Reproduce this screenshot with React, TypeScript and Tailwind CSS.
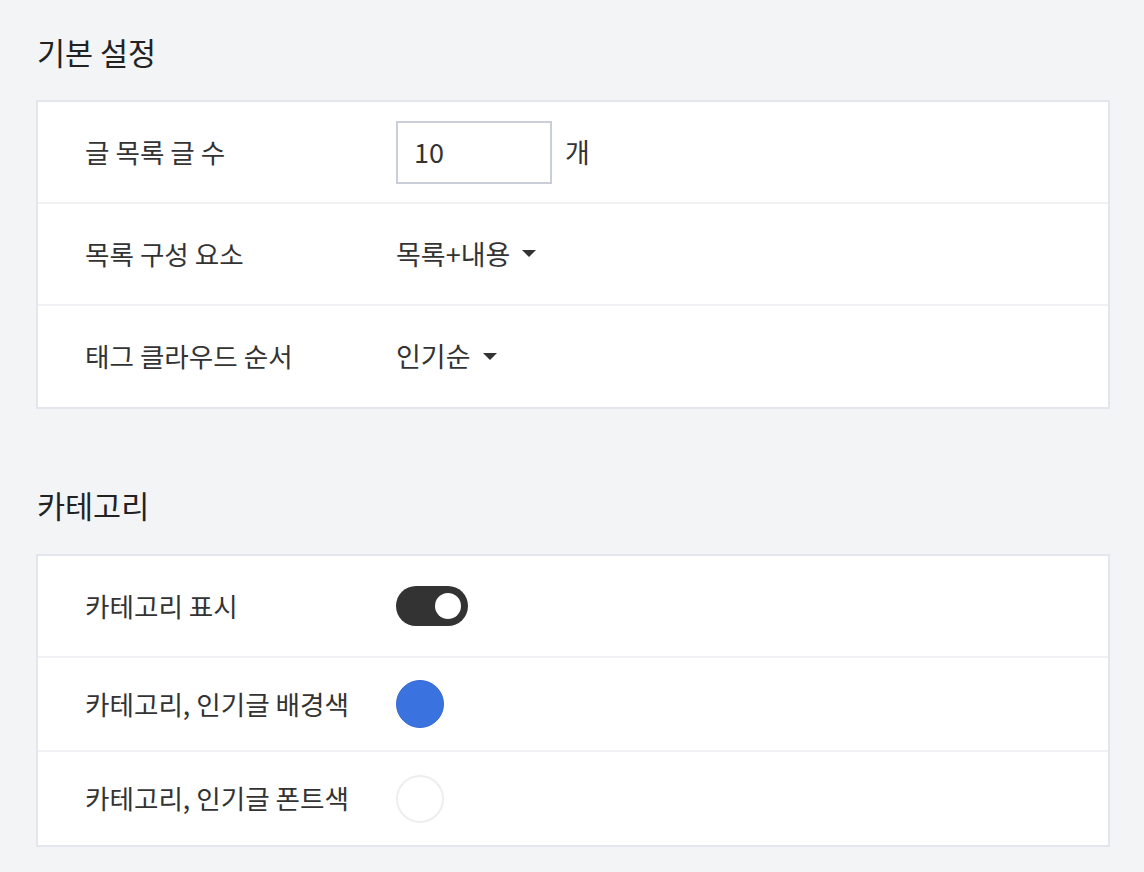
import React from "react";

const font = { fontFamily: '"Noto Sans CJK KR", "Noto Sans", sans-serif' };

function Row({ label, children, h, last }: { label: string; children: React.ReactNode; h: string; last?: boolean }) {
  return (
    <div className={`flex items-center ${h} ${last ? "" : "border-b-2 border-[#eff1f5]"}`}>
      <div className="w-[358px] pl-[47px] text-[26.6px] text-[#333] leading-none">{label}</div>
      <div className="flex items-center">{children}</div>
    </div>
  );
}

function Caret() {
  return (
    <svg width="14" height="8" viewBox="0 0 14 8" className="ml-[12px]">
      <polygon points="0,0 14,0 7,7" fill="#333" />
    </svg>
  );
}

export default function App() {
  return (
    <div style={font} className="min-h-[872px] w-[1144px] bg-[#f3f4f6] pl-[36px] pr-[34px] pt-[30px]">
      <h2 className="text-[30.5px] leading-[44px] text-[#222] pl-[1px]">기본 설정</h2>
      <div className="mt-[26px] border-2 border-[#e3e6ec] bg-white">
        <Row label="글 목록 글 수" h="h-[102px]">
          <div className="flex h-[63px] w-[156px] items-center border-2 border-[#c9ced8] pl-[16px] text-[27px] text-[#333]">10</div>
          <span className="ml-[13px] text-[27px] text-[#333]">개</span>
        </Row>
        <Row label="목록 구성 요소" h="h-[102px]">
          <span className="text-[27px] text-[#333]">목록+내용</span>
          <Caret />
        </Row>
        <Row label="태그 클라우드 순서" h="h-[101px]" last>
          <span className="text-[27px] text-[#333]">인기순</span>
          <Caret />
        </Row>
      </div>
      <h2 className="mt-[74px] text-[30.5px] leading-[44px] text-[#222] pl-[1px]">카테고리</h2>
      <div className="mt-[27px] border-2 border-[#e3e6ec] bg-white">
        <Row label="카테고리 표시" h="h-[102px]">
          <div className="flex h-[40px] w-[72px] items-center justify-end rounded-full bg-[#333] pr-[7px]">
            <div className="h-[26px] w-[26px] rounded-full bg-white" />
          </div>
        </Row>
        <Row label="카테고리, 인기글 배경색" h="h-[94px]">
          <div className="h-[48px] w-[48px] rounded-full border border-[#3568d4] bg-[#3a73e0]" />
        </Row>
        <Row label="카테고리, 인기글 폰트색" h="h-[93px]" last>
          <div className="h-[48px] w-[48px] rounded-full border-2 border-[#eeeeee] bg-white" />
        </Row>
      </div>
    </div>
  );
}
